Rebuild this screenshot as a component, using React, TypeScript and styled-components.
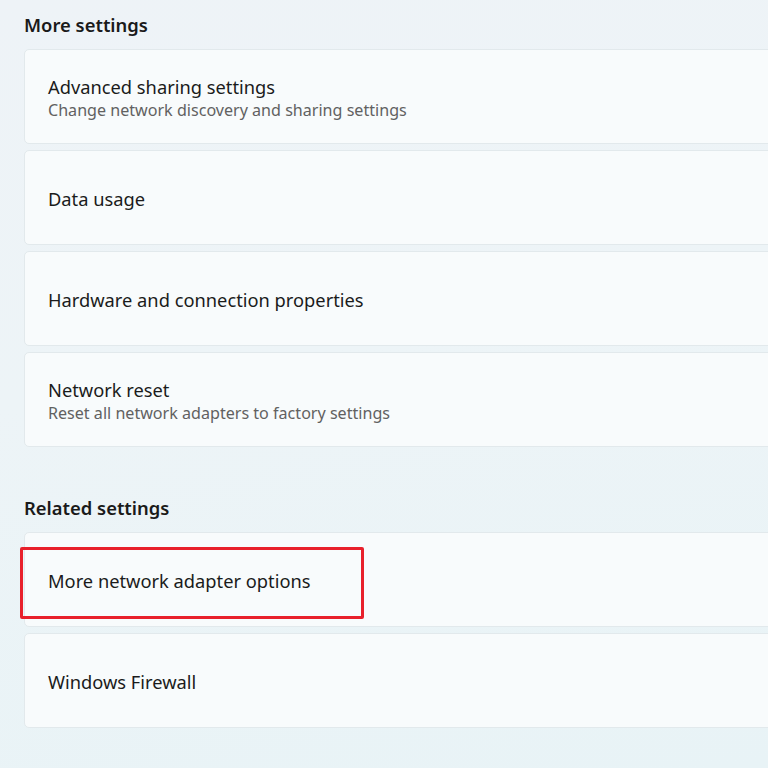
import React from "react";
import styled, { createGlobalStyle } from "styled-components";

const Global = createGlobalStyle`
  html, body { margin: 0; padding: 0; }
  body {
    width: 768px;
    height: 768px;
    overflow: hidden;
    background: linear-gradient(170deg, #eef3f7 0%, #edf4f7 45%, #e8f3f6 100%);
    font-family: "Noto Sans", "Open Sans", sans-serif;
    color: #1b1b1b;
  }
`;

const Page = styled.div`
  padding: 11px 0 0 24px;
  width: 744px;
  overflow: hidden;
  display: flex;
  flex-direction: column;
`;

const SectionTitle = styled.h2<{ $top: number }>`
  margin: ${(p) => p.$top}px 0 0 0;
  font-size: 18.4px;
  font-weight: 600;
  line-height: 28px;
  color: #1a1a1a;
`;

const List = styled.div`
  display: flex;
  flex-direction: column;
  gap: 6px;
  margin-top: 10px;
  margin-right: -20px;
`;

const Card = styled.div`
  position: relative;
  height: 95px;
  box-sizing: border-box;
  background: #f8fbfc;
  border: 1px solid #e2e9ec;
  border-radius: 5px;
  padding: 2px 0 0 23px;
  display: flex;
  flex-direction: column;
  justify-content: center;
`;

const Title = styled.div`
  font-size: 18.3px;
  line-height: 25px;
  color: #1b1b1b;
`;

const Subtitle = styled.div`
  font-size: 16.1px;
  line-height: 23px;
  color: #616161;
`;

const Highlight = styled.div`
  position: absolute;
  left: -5px;
  top: 14px;
  width: 344px;
  height: 72px;
  box-sizing: border-box;
  border: 3px solid #e8202b;
  border-radius: 2px;
  pointer-events: none;
`;

type Item = { title: string; subtitle?: string; highlight?: boolean };

const more: Item[] = [
  { title: "Advanced sharing settings", subtitle: "Change network discovery and sharing settings" },
  { title: "Data usage" },
  { title: "Hardware and connection properties" },
  { title: "Network reset", subtitle: "Reset all network adapters to factory settings" },
];

const related: Item[] = [
  { title: "More network adapter options", highlight: true },
  { title: "Windows Firewall" },
];

const Row = ({ item }: { item: Item }) => (
  <Card>
    <Title>{item.title}</Title>
    {item.subtitle && <Subtitle>{item.subtitle}</Subtitle>}
    {item.highlight && <Highlight />}
  </Card>
);

export default function App() {
  return (
    <>
      <Global />
      <Page>
        <SectionTitle $top={0}>More settings</SectionTitle>
        <List>
          {more.map((i) => (
            <Row key={i.title} item={i} />
          ))}
        </List>
        <SectionTitle $top={47}>Related settings</SectionTitle>
        <List>
          {related.map((i) => (
            <Row key={i.title} item={i} />
          ))}
        </List>
      </Page>
    </>
  );
}
